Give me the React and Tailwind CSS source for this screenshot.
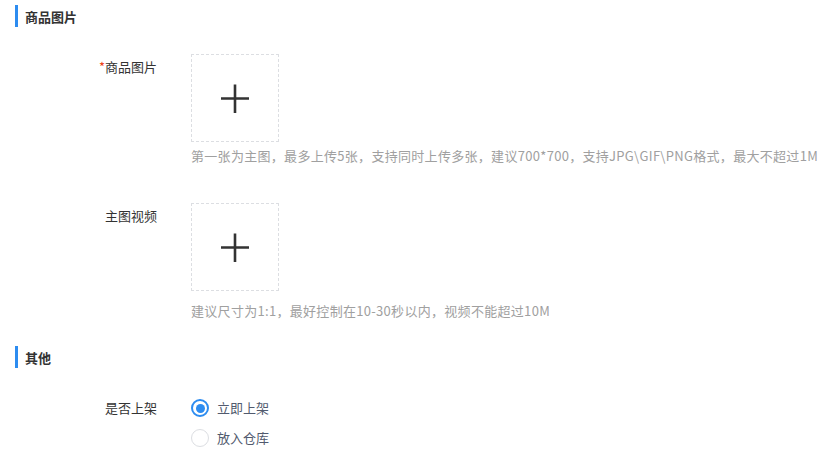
const font = { fontFamily: '"Noto Sans CJK SC", "Noto Sans", sans-serif' };

function SectionTitle({ children, className = "" }) {
  return (
    <div className={`ml-[15px] flex h-[22px] items-center border-l-[3px] border-[#2d8cf0] pl-[7px] ${className}`}>
      <span className="text-[13px] font-bold leading-none text-[#333]">{children}</span>
    </div>
  );
}

function Plus() {
  return (
    <svg width="30" height="30" viewBox="0 0 30 30">
      <path d="M1 15.5h28M15 1.5v29" stroke="#333" strokeWidth="2.6" />
    </svg>
  );
}

function UploadBox() {
  return (
    <div className="flex h-[88px] w-[88px] items-center justify-center border border-dashed border-[#dcdee2] bg-white">
      <Plus />
    </div>
  );
}

function Radio({ checked, label }) {
  return (
    <label className="flex h-[30px] items-center gap-[8px]">
      {checked ? (
        <span className="flex h-[18px] w-[18px] items-center justify-center rounded-full border-2 border-[#2d8cf0]">
          <span className="h-[9px] w-[9px] rounded-full bg-[#2d8cf0]" />
        </span>
      ) : (
        <span className="h-[18px] w-[18px] rounded-full border border-[#dcdee2]" />
      )}
      <span className="text-[13px] text-[#515a6e]">{label}</span>
    </label>
  );
}

export default function App() {
  return (
    <div className="h-[457px] w-[832px] overflow-hidden bg-white pt-[5px]" style={font}>
      {/* ── 商品图片 ─────────────────────────── */}
      <SectionTitle>商品图片</SectionTitle>

      <div className="mt-[27px] flex">
        <div className="w-[157px] pt-[3px] text-right text-[13px] leading-[20px] text-[#333]">
          <span className="text-[#ed4014]">*</span>商品图片
        </div>
        <div className="ml-[34px]">
          <UploadBox />
          <p className="mt-[4px] whitespace-nowrap text-[13px] leading-[20px] tracking-[0.3px] text-[#a0a0a0]">
            第一张为主图，最多上传5张，支持同时上传多张，建议700*700，支持JPG\GIF\PNG格式，最大不超过1M
          </p>
        </div>
      </div>

      <div className="mt-[37px] flex">
        <div className="w-[157px] pt-[3px] text-right text-[13px] leading-[20px] text-[#333]">
          主图视频
        </div>
        <div className="ml-[34px]">
          <UploadBox />
          <p className="mt-[10px] whitespace-nowrap text-[13px] leading-[20px] tracking-[0.3px] text-[#a0a0a0]">
            建议尺寸为1:1，最好控制在10-30秒以内，视频不能超过10M
          </p>
        </div>
      </div>

      {/* ── 其他 ─────────────────────────────── */}
      <SectionTitle className="mt-[25px]">其他</SectionTitle>

      <div className="mt-[25px] flex">
        <div className="w-[157px] text-right text-[13px] leading-[30px] text-[#333]">是否上架</div>
        <div className="ml-[34px]">
          <Radio checked label="立即上架" />
          <Radio label="放入仓库" />
        </div>
      </div>
    </div>
  );
}
